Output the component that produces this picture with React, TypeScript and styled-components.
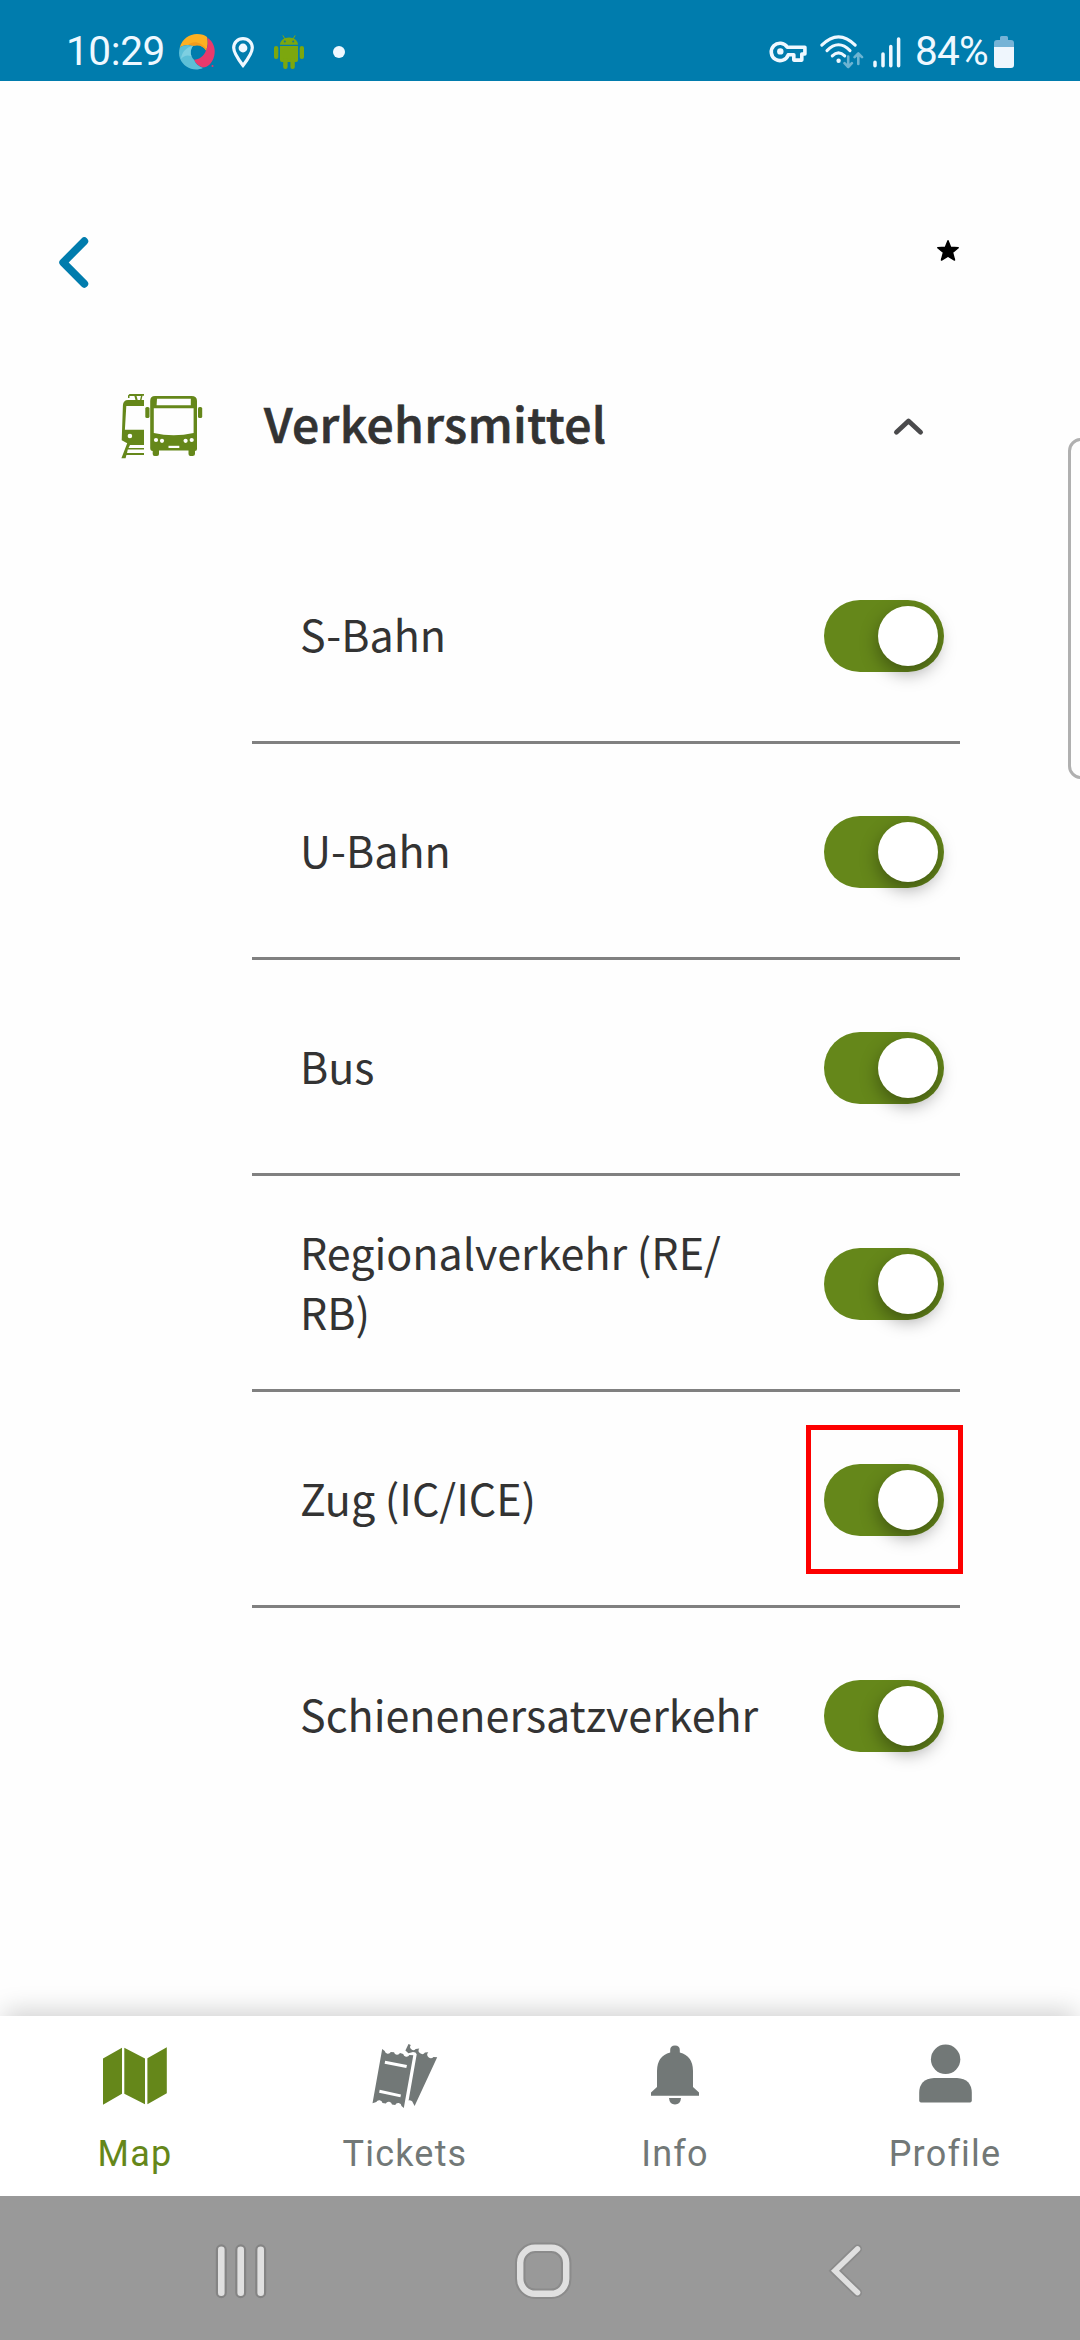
import React from "react";
import styled, { createGlobalStyle } from "styled-components";

const green = "#65871a";
const slate = "#727877";

const GlobalStyle = createGlobalStyle`
  *, *::before, *::after { box-sizing: border-box; }
  body { margin: 0; background: #fefefe; }
  svg { display: block; flex: none; overflow: visible; }
  button { border: 0; padding: 0; background: none; font: inherit; color: inherit; }
`;

const Screen = styled.div`
  position: relative;
  width: 1080px;
  height: 2340px;
  display: flex;
  flex-direction: column;
  overflow: hidden;
  background: #fefefe;
  color: #333;
  font-family: "Noto Sans CJK SC", "Noto Sans", sans-serif;
`;

const StatusBar = styled.div`
  flex: none;
  height: 81px;
  padding: 22px 66px 0;
  display: flex;
  justify-content: space-between;
  background: #007cad;
  color: #eff8ff;
  font: 400 40.5px/58px Roboto, sans-serif;
`;

const StatusGroup = styled.div`
  display: flex;
  align-items: center;
  height: 60px;
`;

const StatusText = styled.span<{ $width: number; $spacing?: number }>`
  width: ${(p) => p.$width}px;
  height: 60px;
  letter-spacing: ${(p) => p.$spacing ?? 0}px;
  white-space: nowrap;
`;

const Gap = styled.span<{ $size: number }>`
  width: ${(p) => p.$size}px;
`;

const Dot = styled.span`
  width: 12px;
  height: 12px;
  border-radius: 50%;
  background: currentColor;
`;

const Main = styled.main`
  flex: 1;
  min-height: 0;
  display: flex;
  flex-direction: column;
`;

const Toolbar = styled.header`
  height: 267px;
  padding: 156px 121px 0 59px;
  display: flex;
  justify-content: space-between;
  align-items: flex-start;
`;

const StarWrap = styled.span`
  padding-top: 3px;
`;

const SectionHeader = styled.div`
  height: 156px;
  padding: 0 157px 0 121px;
  display: flex;
  align-items: center;
`;

const SectionTitle = styled.h1`
  flex: 1;
  margin: 0 0 9px 61px;
  font-size: 48px;
  line-height: 72px;
  font-weight: 500;
  letter-spacing: 0.4px;
  -webkit-text-stroke: 0.7px currentColor;
`;

const OptionList = styled.ul`
  list-style: none;
  margin: 24px 120px 0 252px;
  padding: 0;
`;

const OptionRow = styled.li`
  height: 216px;
  padding: 0 16px 0 48px;
  display: flex;
  align-items: center;
  justify-content: space-between;

  &:not(:last-child) {
    border-bottom: 3px solid #808080;
    padding-top: 3px;
  }
`;

const OptionLabel = styled.span`
  width: 470px;
  margin-bottom: 7px;
  font-size: 43px;
  line-height: 60px;
`;

const Toggle = styled.button`
  position: relative;
  flex: none;
  width: 120px;
  height: 72px;
  padding: 6px;
  display: flex;
  justify-content: flex-end;
  border-radius: 36px;
  background: ${green};
`;

const Knob = styled.span`
  width: 60px;
  height: 60px;
  border-radius: 50%;
  background: #fff;
  box-shadow: 0 7px 18px rgba(0, 0, 0, 0.36);
`;

const Marker = styled.span`
  position: absolute;
  left: -18px;
  top: -39px;
  width: 157px;
  height: 149px;
  border: 5px solid #fd0000;
`;

const EdgeHandle = styled.div`
  position: absolute;
  left: 1067.5px;
  top: 438px;
  width: 30px;
  height: 341px;
  border: 3px solid #b0b0b0;
  border-radius: 13px;
`;

const TabBar = styled.nav`
  flex: none;
  height: 180px;
  display: grid;
  grid-template-columns: repeat(4, 1fr);
  background: #fff;
  box-shadow: 0 -9px 24px -4px rgba(0, 0, 0, 0.18);
`;

const Tab = styled.button<{ $active?: boolean }>`
  display: flex;
  flex-direction: column;
  align-items: center;
  padding-top: 28px;
  color: ${(p) => (p.$active ? green : slate)};
`;

const TabLabel = styled.span`
  margin-top: 25px;
  font: 400 36px/42px Roboto, sans-serif;
  letter-spacing: 1.2px;
`;

const SystemNav = styled.div`
  flex: none;
  height: 144px;
  padding: 49px 215px 0 216px;
  display: grid;
  grid-template-columns: 300px 1fr auto;
  background: #999;
`;

const Swirl = () => (
  <svg width="36" height="36" viewBox="0 0 36 36">
    <path d="M0.8 13.5 C3 5 10.5 0 18 0 C22.5 0 26 1 28 3 C29.3 8 28.8 13 27 16.5 C24.5 12 19.5 10 14 11.8 C9 10 4 11 0.8 13.5Z" fill="#fdb022" />
    <path d="M28.2 3.5 C34.5 7.5 37 15 35.2 22 C33.5 29 28.5 33.5 24 33.5 C19.5 32.5 16.5 29.5 15 25.8 C20.5 25.5 25 22 27 16.5 C28.8 13 29.3 8 28.2 3.5Z" fill="#e93a6c" />
    <path d="M0.8 13.5 C4 11 9 10 14 11.8 C10.8 16 11 22 15 25.8 C16.5 29.5 19.5 32.5 24 34 C15 38 4.5 33.5 1 24.5 C-0.3 21 -0.2 17 0.8 13.5Z" fill="#5cbfd7" />
    <path d="M9 10.8 C14 6.5 22 7.5 27.5 15.2 L27 16.5 C24.5 12 19.5 10 14 11.8Z" fill="#f59b1c" />
    <path d="M2 25 C2.5 18.5 7 13.5 14 11.8 C11.5 15 11 19 12.5 22.5 C8.5 20.5 4.5 22 2 25Z" fill="#7dcfe1" />
    <circle cx="33.5" cy="32" r="1" fill="#e93468" />
  </svg>
);

const Pin = () => (
  <svg width="22" height="31" viewBox="0 0 22 31">
    <path d="M11 1.7 C5.5 1.7 1.7 5.8 1.7 10.8 C1.7 16 6 22 11 28.5 C16 22 20.3 16 20.3 10.8 C20.3 5.8 16.5 1.7 11 1.7Z" fill="none" stroke="currentColor" strokeWidth="3.2" />
    <circle cx="11" cy="11" r="4.4" fill="currentColor" />
  </svg>
);

const Robot = () => (
  <svg width="30" height="34" viewBox="0 0 30 34" fill="#7ca70e">
    <path d="M6 9.8 C6 5.5 10 2.4 15 2.4 S24 5.5 24 9.8Z" />
    <path d="M9 0.7 L11 4 M21 0.7 L19 4" stroke="#7ca70e" strokeWidth="1" strokeLinecap="round" />
    <circle cx="10.8" cy="6.6" r="1" fill="#12759b" />
    <circle cx="19.2" cy="6.6" r="1" fill="#12759b" />
    <path d="M6 11 H24 V25 Q24 27 22 27 H8 Q6 27 6 25Z" />
    <rect x="0" y="11" width="4.3" height="13" rx="2.1" />
    <rect x="25.7" y="11" width="4.3" height="13" rx="2.1" />
    <rect x="9.2" y="23" width="4.4" height="11" rx="2.1" />
    <rect x="16.4" y="23" width="4.4" height="11" rx="2.1" />
  </svg>
);

const Key = () => (
  <svg width="37" height="22" viewBox="0 0 37 22">
    <path d="M17.3 6.2 H34.9 V13 H31.8 V19.1 H23.8 V13.8 H18.2 A8.7 8.7 0 1 1 17.3 6.2Z" fill="none" stroke="currentColor" strokeWidth="3.6" strokeLinejoin="round" />
    <circle cx="10.3" cy="10.4" r="3.2" fill="currentColor" />
  </svg>
);

const Wifi = () => (
  <svg width="44" height="34" viewBox="0 0 44 34" fill="none" stroke="currentColor" strokeWidth="3.1" strokeLinecap="round">
    <path d="M1.8 10.2 Q18.5 -6.5 35.2 10.2" />
    <path d="M7 15.6 Q18.5 4 30 15.6" />
    <path d="M12.3 20.8 Q18.5 14.8 24.7 20.8" />
    <circle cx="18.6" cy="25.7" r="2.2" fill="currentColor" stroke="none" />
    <g opacity=".45" strokeWidth="2.6" strokeLinejoin="round">
      <path d="M28.2 21.5 V32 M24.5 28.2 L28.2 32 L31.9 28.2" />
      <path d="M38.3 29 V18.5 M34.6 22.2 L38.3 18.5 L42 22.2" />
    </g>
  </svg>
);

const Signal = () => (
  <svg width="28" height="31" viewBox="0 0 28 31" stroke="currentColor" strokeWidth="3.5" strokeLinecap="round">
    <path d="M2 25.3 V28.8 M10 17 V28.8 M17.8 9.5 V28.8 M25.6 2 V28.8" />
  </svg>
);

const Battery = () => (
  <svg width="20" height="32" viewBox="0 0 20 32">
    <path d="M6 1.5 Q6 0 7.5 0 H12.5 Q14 0 14 1.5 V4 H17 Q20 4 20 7 V11 H0 V7 Q0 4 3 4 H6Z" fill="#76b3d6" />
    <path d="M0 11 H20 V29 Q20 32 17 32 H3 Q0 32 0 29Z" fill="#eff6fd" />
  </svg>
);

const TransportIcon = () => (
  <svg width="82" height="65" viewBox="0 0 82 65" fill={green}>
    <path d="M8.5 0 H23 V1.7 H21.5 L20.5 6 H23 V12 H5.3 L3.9 35.8 H23 V51 H9 L7.5 54 H23 V55.6 H6.8 L6 59 H23 V61 H5.4 L4.6 64.2 H0.4 L6.2 49.2 L0.7 46.2 L1.9 11.5 Q2.2 6 7 6 H14.5 L13.4 2 H8.5 V4 H7 V1.5Z" />
    <path d="M15.5 2 L16.7 6 H19 L20 2Z" fill="#fefefe" />
    <circle cx="8.9" cy="42" r="2.3" fill="#fefefe" />
    <path d="M34 2 H70.5 Q76 2 76 7 V55 Q76 57 74 57 V60 Q74 62 71.5 62 H69.5 Q67.5 62 67.5 60 V56.6 H38 V60 Q38 62 36 62 H33.6 Q31.7 62 31.7 60 V57 Q29.2 57 29.2 54 V7 Q29.2 2 34 2Z" />
    <path d="M36 4.8 H69.8 V11.2 H35.6Z M32.8 14.2 H72.6 V39 Q52.5 43.5 32.8 39Z" fill="#fefefe" />
    <rect x="24.3" y="13" width="4.2" height="11" rx="1.6" />
    <rect x="77" y="13" width="4.2" height="11" rx="1.6" />
    <g fill="#fefefe">
      <circle cx="35" cy="46" r="2.1" />
      <circle cx="41" cy="46.8" r="2.1" />
      <circle cx="64.6" cy="46.8" r="2.1" />
      <circle cx="70.7" cy="46" r="2.1" />
      <rect x="47.5" y="51.8" width="10.8" height="2.2" />
    </g>
  </svg>
);

const MapIcon = () => (
  <svg width="64" height="64" viewBox="0 0 64 64" fill="currentColor">
    <path d="M0 14.5 L19 3.7 V49.8 L0 60.7Z M21.3 3.7 L42 14.5 V60.3 L21.3 49.8Z M44.4 14.2 L63.8 3.2 V49.2 L44.4 60.3Z" />
  </svg>
);

const TicketsIcon = () => (
  <svg width="66" height="64" viewBox="0 0 66 64" fill="currentColor">
    <path d="M10.2 5 L12.7 7.1 A3.3 3.3 0 0 0 18.8 8 L22 8.3 A3.3 3.3 0 0 0 28 9.1 L31.2 10 A3.3 3.3 0 0 0 37.4 11 L41.3 11.3 L31.8 64 L29.5 62.1 A3.3 3.3 0 0 0 23.2 61 L20 60.6 A3.3 3.3 0 0 0 13.8 59.6 L10.5 59 A3.3 3.3 0 0 0 4.3 58 L0.5 59.2Z" />
    <path d="M13.2 16.7 L35 21 L34.3 24 L12.6 19.8Z M7.7 45.7 L29 50.4 L28.4 53.3 L7.1 48.7Z" fill="#fff" />
    <path d="M36.5 0 L38.8 1 A3.2 3.2 0 0 0 43.7 5.1 L47.3 4.5 A3.3 3.3 0 0 0 53 8.5 L56.3 8.2 A3.3 3.3 0 0 0 61.5 13 L65.2 13.3 L42.6 62 L40.9 58.8 A3.3 3.3 0 0 0 36.6 56.5 L44.7 10.3 Q44 8 41 8 L36.4 9.2 L33.4 6.4Z" />
  </svg>
);

const BellIcon = () => (
  <svg width="48" height="64" viewBox="0 0 48 64" fill="currentColor">
    <path d="M24 1.5 Q28.8 1.5 28.8 6 V8.5 Q42 12 42 27 V43 L48 48.5 V51.7 H0 V48.5 L6 43 V27 Q6 12 19.2 8.5 V6 Q19.2 1.5 24 1.5Z M18 54 H30 Q29.5 60.5 24 60.5 T18 54Z" />
  </svg>
);

const ProfileIcon = () => (
  <svg width="53" height="64" viewBox="0 0 53 64" fill="currentColor">
    <circle cx="26.6" cy="15.3" r="14.7" />
    <path d="M15 34 H38 Q52.8 35 52.8 49 V56.5 Q52.8 58.4 51 58.4 H2 Q0.2 58.4 0.2 56.5 V49 Q0.2 35 15 34Z" />
  </svg>
);

const options = [
  { label: "S-Bahn" },
  { label: "U-Bahn" },
  { label: "Bus" },
  { label: "Regionalverkehr (RE/\u200bRB)" },
  { label: "Zug (IC/ICE)", marked: true },
  { label: "Schienenersatzverkehr" },
];

const tabs = [
  { label: "Map", icon: <MapIcon />, active: true },
  { label: "Tickets", icon: <TicketsIcon /> },
  { label: "Info", icon: <BellIcon /> },
  { label: "Profile", icon: <ProfileIcon /> },
];

export default function App() {
  return (
    <Screen>
      <GlobalStyle />
      <StatusBar>
        <StatusGroup>
          <StatusText $width={113} $spacing={-0.4}>10:29</StatusText>
          <Swirl />
          <Gap $size={17} />
          <Pin />
          <Gap $size={20} />
          <Robot />
          <Gap $size={29} />
          <Dot />
        </StatusGroup>
        <StatusGroup>
          <Key />
          <Gap $size={13} />
          <Wifi />
          <Gap $size={9} />
          <Signal />
          <Gap $size={14} />
          <StatusText $width={79} $spacing={-0.8}>84%</StatusText>
          <Battery />
        </StatusGroup>
      </StatusBar>

      <Main>
        <Toolbar>
          <button aria-label="Zurück">
            <svg width="30" height="51" viewBox="0 0 30 51">
              <path d="M25.3 4.2 L4.2 25.5 L25.3 46.8" fill="none" stroke="#007cad" strokeWidth="7.8" strokeLinecap="round" strokeLinejoin="round" />
            </svg>
          </button>
          <StarWrap>
            <svg width="22" height="21" viewBox="0 0 22 21">
              <path d="M11 0.8 L13.6 7.3 L21.2 7.7 L15.5 12.4 L17.5 20 L11 16 L4.5 20 L6.5 12.4 L0.8 7.7 L8.4 7.3Z" fill="#000" stroke="#000" strokeWidth="1.5" strokeLinejoin="round" />
            </svg>
          </StarWrap>
        </Toolbar>

        <SectionHeader>
          <TransportIcon />
          <SectionTitle>Verkehrsmittel</SectionTitle>
          <svg width="29" height="17" viewBox="0 0 29 17">
            <path d="M2.4 14.2 L14.5 3 L26.6 14.2" fill="none" stroke="#4a4a4c" strokeWidth="4.8" strokeLinecap="round" strokeLinejoin="round" />
          </svg>
        </SectionHeader>

        <OptionList>
          {options.map((o) => (
            <OptionRow key={o.label}>
              <OptionLabel>{o.label}</OptionLabel>
              <Toggle role="switch" aria-checked="true" aria-label={o.label}>
                <Knob />
                {o.marked && <Marker />}
              </Toggle>
            </OptionRow>
          ))}
        </OptionList>
      </Main>

      <TabBar>
        {tabs.map((t) => (
          <Tab key={t.label} $active={t.active}>
            {t.icon}
            <TabLabel>{t.label}</TabLabel>
          </Tab>
        ))}
      </TabBar>

      <SystemNav>
        <svg width="50" height="54" viewBox="0 0 50 54" fill="#e0e0e0" stroke="#848484" paintOrder="stroke">
          <rect x="2" y="1.5" width="6.6" height="49.5" rx="3.3" strokeWidth="4.4" />
          <rect x="21.4" y="1.5" width="6.6" height="49.5" rx="3.3" strokeWidth="4.4" />
          <rect x="41.4" y="1.5" width="6.6" height="49.5" rx="3.3" strokeWidth="4.4" />
        </svg>
        <svg width="54" height="54" viewBox="0 0 54 54" fill="none">
          <rect x="4.2" y="2.8" width="46" height="46" rx="15" stroke="#8b8b8b" strokeWidth="10.5" />
          <rect x="4.2" y="2.8" width="46" height="46" rx="15" stroke="#e0e0e0" strokeWidth="6.4" />
        </svg>
        <svg width="34" height="54" viewBox="0 0 34 54" fill="none" strokeLinecap="round">
          <path d="M26.5 4 L4 25.8 L26.5 47.6" stroke="#8b8b8b" strokeWidth="9" />
          <path d="M26.5 4 L4 25.8 L26.5 47.6" stroke="#e0e0e0" strokeWidth="5.6" />
        </svg>
      </SystemNav>
      <EdgeHandle />
    </Screen>
  );
}
